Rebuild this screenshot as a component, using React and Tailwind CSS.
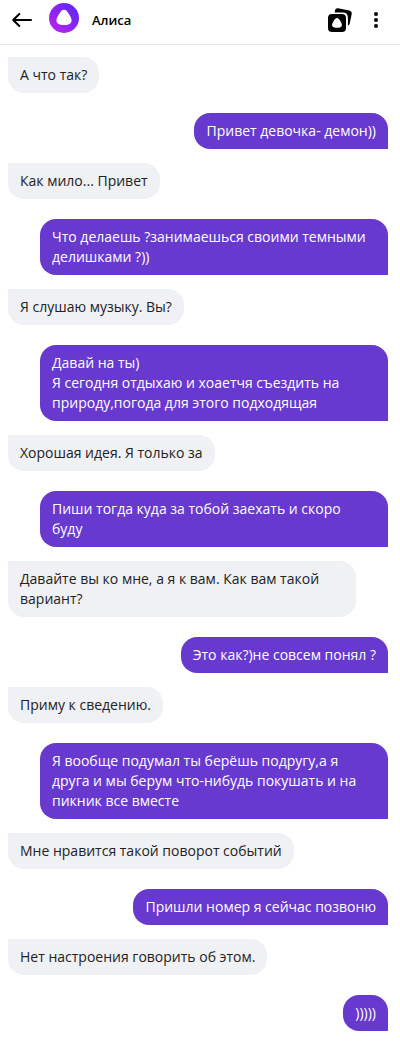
import React from 'react';
import clsx from 'clsx';

const messages = [
  { id: 1, from: 'alice', text: 'А что так?' },
  { id: 2, from: 'me', text: 'Привет девочка- демон))' },
  { id: 3, from: 'alice', text: 'Как мило... Привет' },
  { id: 4, from: 'me', text: 'Что делаешь ?занимаешься своими темными делишками ?))' },
  { id: 5, from: 'alice', text: 'Я слушаю музыку. Вы?' },
  { id: 6, from: 'me', text: 'Давай на ты)\nЯ сегодня отдыхаю и хоаетчя съездить на природу,погода для этого подходящая' },
  { id: 7, from: 'alice', text: 'Хорошая идея. Я только за' },
  { id: 8, from: 'me', text: 'Пиши тогда куда за тобой заехать и скоро\nбуду' },
  { id: 9, from: 'alice', text: 'Давайте вы ко мне, а я к вам. Как вам такой вариант?' },
  { id: 10, from: 'me', text: 'Это как?)не совсем понял ?' },
  { id: 11, from: 'alice', text: 'Приму к сведению.' },
  { id: 12, from: 'me', text: 'Я вообще подумал ты берёшь подругу,а я друга и мы берум что-нибудь покушать и на пикник все вместе' },
  { id: 13, from: 'alice', text: 'Мне нравится такой поворот событий' },
  { id: 14, from: 'me', text: 'Пришли номер я сейчас позвоню' },
  { id: 15, from: 'alice', text: 'Нет настроения говорить об этом.' },
  { id: 16, from: 'me', text: ')))))' },
];

function BackIcon() {
  return (
    <svg className="w-5 h-4" viewBox="0 0 20 16" fill="none" stroke="#000" strokeWidth="2" strokeLinecap="round" strokeLinejoin="round">
      <path d="M19 8H1.200M7.300 2 1.200 8l6.100 6" />
    </svg>
  );
}

function AliceLogo() {
  return (
    <svg className="w-[30px] h-[30px]" viewBox="0 0 30 30">
      <defs>
        <linearGradient id="alice" x1="0.1" y1="0.9" x2="0.8" y2="0.1">
          <stop offset="0" stopColor="#bb22f5" />
          <stop offset="1" stopColor="#6128f0" />
        </linearGradient>
      </defs>
      <circle cx="15" cy="15" r="15" fill="url(#alice)" />
      <path d="M15 6.800c1.900 0 3.200 1.500 4.900 4.300 1.800 3 2.900 5.300 2.700 6.900-.4 3-3.800 4.100-7.600 4.100s-7.200-1.100-7.600-4.100c-.2-1.600.9-3.900 2.700-6.900 1.700-2.800 3-4.300 4.900-4.300z" fill="#fff" />
    </svg>
  );
}

function SkillsIcon() {
  return (
    <svg className="w-6 h-6" viewBox="0 0 24 24">
      <path d="M6.600 4.600 7 2.400C7.300.9 8.500.1 10 .3l11.100 2.100c1.900.4 2.900 1.800 2.600 3.600L21.800 15.300c-.2 1.200-.9 2-1.900 2.400V9.500c0-3-1.900-4.900-4.900-4.900z" fill="#000" />
      <rect x="0" y="6" width="18" height="18" rx="4" fill="#000" />
      <path d="M9 10c1.300 0 2.100.9 3.100 2.600 1.200 2 1.900 3.500 1.800 4.600-.3 1.900-2.400 2.600-4.900 2.600s-4.600-.7-4.900-2.600c-.1-1.100.6-2.600 1.800-4.600C6.900 10.900 7.700 10 9 10z" fill="#fff" />
    </svg>
  );
}

function MoreIcon() {
  return (
    <svg className="w-1 h-4" viewBox="0 0 4 16" fill="#000">
      <circle cx="2" cy="2" r="2" />
      <circle cx="2" cy="8" r="2" />
      <circle cx="2" cy="14" r="2" />
    </svg>
  );
}

function Header() {
  return (
    <header className="flex items-center h-11 box-content px-3 border-b border-[#e8e8ea]">
      <button type="button" aria-label="Назад" className="mb-1 mr-[17px] cursor-pointer">
        <BackIcon />
      </button>
      <div className="mb-2">
        <AliceLogo />
      </div>
      <h1 className="flex-1 ml-[13px] mb-1 text-[13px] leading-5 font-semibold text-black">Алиса</h1>
      <button type="button" aria-label="Навыки" className="mb-1 mr-[22px] cursor-pointer">
        <SkillsIcon />
      </button>
      <button type="button" aria-label="Меню" className="mb-1 mr-2.5 cursor-pointer">
        <MoreIcon />
      </button>
    </header>
  );
}

function Message({ from, text }) {
  const mine = from === 'me';
  const multiline = text.includes('\n');

  return (
    <li className={clsx('flex', mine ? 'justify-end pl-8 mt-5' : 'justify-start pr-8 mt-3.5 first:mt-0')}>
      <p
        className={clsx(
          'px-3 py-2 whitespace-pre-line text-sm leading-5',
          multiline && 'w-full',
          mine
            ? 'bg-[#6839cf] text-white rounded-2xl rounded-br-none'
            : 'bg-[#f0f1f5] text-[#222] rounded-2xl rounded-tl-none'
        )}
      >
        {text}
      </p>
    </li>
  );
}

export default function App() {
  return (
    <div className="min-h-screen bg-white font-['Open_Sans','Noto_Sans',sans-serif]">
      <Header />
      <main>
        <ul className="pt-3 pb-2.5 pl-2 pr-3">
          {messages.map(m => (
            <Message key={m.id} from={m.from} text={m.text} />
          ))}
        </ul>
      </main>
    </div>
  );
}
